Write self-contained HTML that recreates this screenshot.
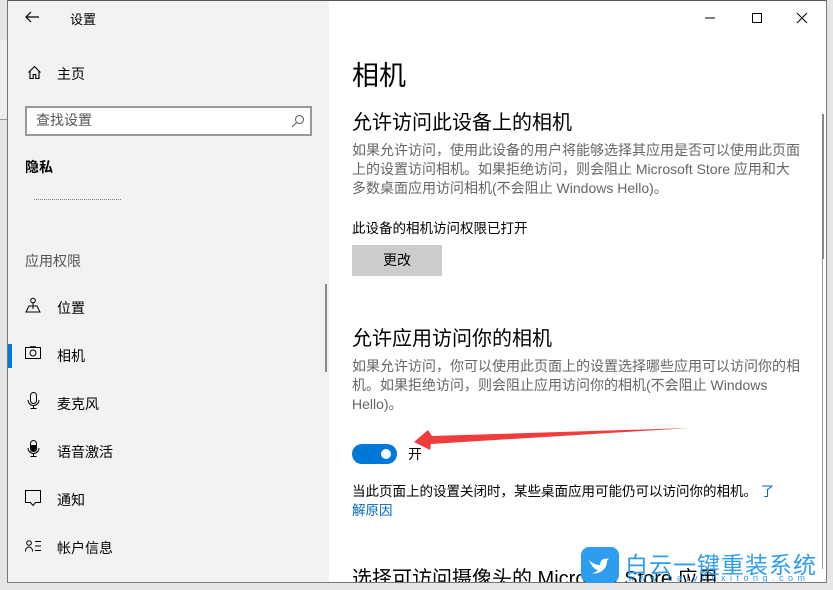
<!DOCTYPE html>
<html><head><meta charset="utf-8"><style>
*{margin:0;padding:0;box-sizing:border-box}
body{width:833px;height:590px;overflow:hidden;background:#e6e6e6;font-family:"Liberation Sans","Noto Sans CJK SC",sans-serif;position:relative}
.a{position:absolute;white-space:nowrap}
.win{position:absolute;left:7px;top:0;width:820px;height:583px;border:1px solid #777;border-top:1px solid #555;background:#fff;overflow:hidden}
.side{position:absolute;left:0;top:0;width:321px;height:100%;background:#f2f2f2}
.nav{font-size:14px;color:#000}
.p{font-size:14px;color:#666;line-height:19px}
</style></head><body>
<div class="a" style="left:0;top:40px;width:7px;height:80px;border-bottom:1px solid #999;background:#eee"></div>
<div class="win">
 <div class="side">
  <svg class="a" style="left:16px;top:9px" width="16" height="14" viewBox="0 0 16 14"><path d="M15 7H2M7 2L2 7l5 5" stroke="#000" stroke-width="1.2" fill="none"/></svg>
  <div class="a" style="left:62px;top:8px;font-size:13px">设置</div>
  <svg class="a" style="left:19px;top:64px" width="15" height="15" viewBox="0 0 15 15"><path d="M1.5 7.5L7.5 1.5 13.5 7.5M3 6v7.5h3.2V9.5h2.6v4H12V6" stroke="#000" stroke-width="1.1" fill="none"/></svg>
  <div class="a nav" style="left:49px;top:63px">主页</div>
  <div class="a" style="left:17px;top:105px;width:287px;height:30px;border:2px solid #999;background:#fff"></div>
  <div class="a" style="left:28px;top:109px;font-size:14px;color:#555">查找设置</div>
  <svg class="a" style="left:283px;top:113px" width="14" height="14" viewBox="0 0 14 14"><circle cx="8.5" cy="5.5" r="4" stroke="#555" fill="none"/><path d="M5.5 8.5L1 13" stroke="#555"/></svg>
  <div class="a" style="left:17px;top:156px;font-size:14px;font-weight:bold">隐私</div>
  <div class="a" style="left:26px;top:198px;width:87px;height:1px;border-top:1px dotted #777"></div>
  <div class="a" style="left:17px;top:250px;font-size:14px;color:#555">应用权限</div>
  <svg class="a" style="left:17px;top:296px" width="17" height="17" viewBox="0 0 17 17"><circle cx="8" cy="3.5" r="2.3" stroke="#000" fill="none"/><path d="M8 6v6M1 15l3-6h8l3 6z" stroke="#000" fill="none"/></svg>
  <div class="a nav" style="left:49px;top:297px">位置</div>
  <div class="a" style="left:0;top:343px;width:4px;height:24px;background:#0078d7"></div>
  <svg class="a" style="left:17px;top:345px" width="17" height="14" viewBox="0 0 17 14"><rect x="0.5" y="1.5" width="15" height="11" stroke="#000" fill="none"/><circle cx="8" cy="7" r="3" stroke="#000" fill="none"/><path d="M5 1.5l1-1.2h4l1 1.2" stroke="#000" fill="none"/></svg>
  <div class="a nav" style="left:49px;top:345px">相机</div>
  <svg class="a" style="left:19px;top:391px" width="14" height="18" viewBox="0 0 14 18"><rect x="3.5" y="0.5" width="6" height="11" rx="3" stroke="#000" fill="none"/><path d="M1 8a5.5 5.5 0 0 0 11 0M6.5 13.5v3M3.5 16.5h6" stroke="#000" fill="none"/></svg>
  <div class="a nav" style="left:49px;top:393px">麦克风</div>
  <svg class="a" style="left:19px;top:439px" width="14" height="18" viewBox="0 0 14 18"><rect x="3.5" y="0.5" width="6" height="11" rx="3" stroke="#000" fill="none"/><rect x="3.5" y="5" width="6" height="6.5" fill="#000"/><path d="M1 8a5.5 5.5 0 0 0 11 0M6.5 13.5v3M3.5 16.5h6" stroke="#000" fill="none"/></svg>
  <div class="a nav" style="left:49px;top:441px">语音激活</div>
  <svg class="a" style="left:17px;top:489px" width="17" height="17" viewBox="0 0 17 17"><path d="M0.5 0.5h15v12h-5l-2.5 3-2.5-3h-5z" stroke="#000" fill="none"/></svg>
  <div class="a nav" style="left:49px;top:489px">通知</div>
  <svg class="a" style="left:17px;top:539px" width="17" height="12" viewBox="0 0 17 12"><circle cx="4" cy="3" r="2.3" stroke="#000" fill="none"/><path d="M0.5 11.5c0-3 1.5-4.5 3.5-4.5s3.5 1.5 3.5 4.5M10 1.5h6M10 6h6M10 10.5h6" stroke="#000" fill="none"/></svg>
  <div class="a nav" style="left:49px;top:537px">帐户信息</div>
  <div class="a" style="left:317px;top:283px;width:2px;height:88px;background:#888"></div>
 </div>
 <svg class="a" style="left:696px;top:11px" width="12" height="12"><path d="M1 6h10" stroke="#000"/></svg>
 <svg class="a" style="left:743px;top:11px" width="12" height="12"><rect x="1.5" y="1.5" width="9" height="9" stroke="#000" fill="none"/></svg>
 <svg class="a" style="left:788px;top:11px" width="12" height="12"><path d="M1 1l10 10M11 1L1 11" stroke="#000"/></svg>
 <div class="a" style="left:814px;top:113px;width:2px;height:145px;background:#888"></div>
 <div class="a" style="left:814px;top:258px;width:1px;height:310px;background:#999"></div>
 <div class="a" style="left:344px;top:53px;font-size:27px">相机</div>
 <div class="a" style="left:344px;top:105px;font-size:20px">允许访问此设备上的相机</div>
 <div class="a p" style="left:344px;top:140px">如果允许访问，使用此设备的用户将能够选择其应用是否可以使用此页面<br>上的设置访问相机。如果拒绝访问，则会阻止 Microsoft Store 应用和大<br>多数桌面应用访问相机(不会阻止 Windows Hello)。</div>
 <div class="a" style="left:344px;top:216px;font-size:13.5px">此设备的相机访问权限已打开</div>
 <div class="a" style="left:344px;top:244px;width:90px;height:31px;background:#ccc;text-align:center;line-height:31px;font-size:14px">更改</div>
 <div class="a" style="left:344px;top:321px;font-size:20px">允许应用访问你的相机</div>
 <div class="a p" style="left:344px;top:356px">如果允许访问，你可以使用此页面上的设置选择哪些应用可以访问你的相<br>机。如果拒绝访问，则会阻止应用访问你的相机(不会阻止 Windows<br>Hello)。</div>
 <div class="a" style="left:344px;top:443px;width:45px;height:20px;border-radius:10px;background:#0078d7"></div>
 <div class="a" style="left:373px;top:448px;width:10px;height:10px;border-radius:5px;background:#fff"></div>
 <div class="a" style="left:400px;top:443px;font-size:14px">开</div>
 <div class="a" style="left:344px;top:481px;font-size:13.5px;line-height:19px">当此页面上的设置关闭时，某些桌面应用可能仍可以访问你的相机。 <span style="color:#0067c0">了</span><br><span style="color:#0067c0">解原因</span></div>
 <div class="a" style="left:344px;top:561px;font-size:20px">选择可访问摄像头的 Microsoft Store 应用</div>
</div>
<svg class="a" style="left:0;top:0" width="833" height="590"><path d="M690 428L432 436l-4-6-14 12 16 8 1-6z" fill="#f03c3c"/></svg>
<div class="a" style="left:581px;top:547px;width:38px;height:36px;border-radius:8px;background:#2e9df0"></div>
<svg class="a" style="left:587px;top:554px" width="26" height="22" viewBox="0 0 26 22"><path d="M2 6c4 4 8 5 11 5 0-4 3-7 6-6l3-1-2 3c0 8-7 14-16 12 3 0 5-1 7-3-3 0-6-3-9-10z" fill="#fff"/></svg>
<div class="a" style="left:625px;top:546px;font-size:23px;color:#2e9df0;letter-spacing:1px">白云一键重装系统</div>
<div class="a" style="left:628px;top:573px;font-size:9px;color:#2e9df0;letter-spacing:4.5px">www.baiyunxitong.com</div>
</body></html>
